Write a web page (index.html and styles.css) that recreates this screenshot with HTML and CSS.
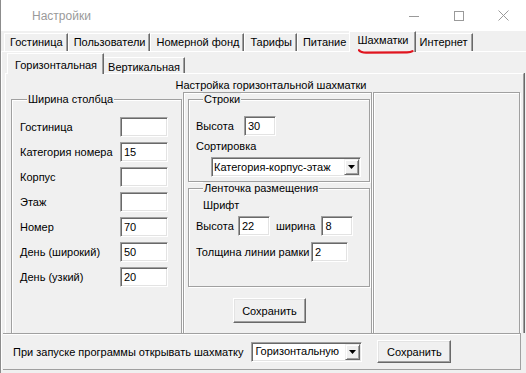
FILE: index.html
```html
<!DOCTYPE html>
<html lang="ru">

<head>
    <meta charset="UTF-8">
    <meta name="viewport" content="width=device-width, initial-scale=1.0">
    <title>Настройки</title>
    <link rel="stylesheet" href="styles.css">
</head>

<body>
    <div class="window">
        <div class="titlebar">
            <span class="title">Настройки</span>
            <div class="controls">
                <span class="ctl"><svg width="10" height="10" viewBox="0 0 10 10"><path d="M0 5.5H10" stroke="#9a9a9a" /></svg></span>
                <span class="ctl"><svg width="10" height="10" viewBox="0 0 10 10"><rect x="0.5" y="0.5" width="9" height="9" fill="none" stroke="#9a9a9a" /></svg></span>
                <span class="ctl"><svg width="11" height="11" viewBox="0 0 11 11"><path d="M0.5 0.5L10.5 10.5M10.5 0.5L0.5 10.5" stroke="#9a9a9a" /></svg></span>
            </div>
        </div>

        <div class="tabs tabs-outer">
            <span class="tab">Гостиница</span>
            <span class="tab">Пользователи</span>
            <span class="tab">Номерной фонд</span>
            <span class="tab">Тарифы</span>
            <span class="tab">Питание</span>
            <span class="tab active">Шахматки<svg class="mark" width="56" height="6" viewBox="0 0 56 6"><path d="M1 1.2Q3 3.6 8 3.6L49 3.4Q53 3.3 54.5 2.2" fill="none" stroke="#e0141e" stroke-width="2.2" stroke-linecap="round" /></svg></span>
            <span class="tab">Интернет</span>
        </div>

        <div class="page">
            <div class="tabs tabs-inner">
                <span class="tab active">Горизонтальная</span>
                <span class="tab">Вертикальная</span>
            </div>

            <div class="subpage">
                <div class="caption">Настройка горизонтальной шахматки</div>
                <div class="columns">
                    <div class="col col-left">
                        <fieldset class="group group-width">
                            <legend>Ширина столбца</legend>
                            <div class="form">
                                <label>Гостиница</label><span class="edit"></span>
                                <label>Категория номера</label><span class="edit">15</span>
                                <label>Корпус</label><span class="edit"></span>
                                <label>Этаж</label><span class="edit"></span>
                                <label>Номер</label><span class="edit">70</span>
                                <label>День (широкий)</label><span class="edit">50</span>
                                <label>День (узкий)</label><span class="edit">20</span>
                            </div>
                        </fieldset>
                    </div>

                    <div class="col col-mid frame">
                        <fieldset class="group group-rows">
                            <legend>Строки</legend>
                            <div class="row">
                                <label class="lbl-height">Высота</label><span class="edit edit-sm">30</span>
                            </div>
                            <div class="sort-label">Сортировка</div>
                            <div class="combo combo-sort">
                                <span class="combo-text">Категория-корпус-этаж</span>
                                <span class="combo-btn"><svg width="7" height="4" viewBox="0 0 7 4"><path d="M0 0H7L3.5 4Z" /></svg></span>
                            </div>
                        </fieldset>

                        <fieldset class="group group-strip">
                            <legend>Ленточка размещения</legend>
                            <div class="font-label">Шрифт</div>
                            <div class="row">
                                <label class="lbl-h2">Высота</label><span class="edit edit-sm">22</span>
                                <label class="lbl-w">ширина</label><span class="edit edit-sm">8</span>
                            </div>
                            <div class="row row-border">
                                <label class="lbl-border">Толщина линии рамки</label><span class="edit edit-md">2</span>
                            </div>
                        </fieldset>

                        <button class="button button-save">Сохранить</button>
                    </div>

                    <div class="col col-right frame"></div>
                </div>
            </div>

            <div class="startup">
                <span>При запуске программы открывать шахматку</span>
                <div class="combo combo-start">
                    <span class="combo-text">Горизонтальную</span>
                    <span class="combo-btn"><svg width="7" height="4" viewBox="0 0 7 4"><path d="M0 0H7L3.5 4Z" /></svg></span>
                </div>
                <button class="button button-start">Сохранить</button>
            </div>
        </div>
    </div>
</body>

</html>
```

FILE: styles.css
```css
* {
    padding: 0;
    margin: 0;
    box-sizing: border-box;
}

html,
body {
    width: 526px;
    height: 373px;
    overflow: hidden;
}

body {
    background-color: #f0f0f0;
    font-family: "Liberation Sans", Arial, sans-serif;
    font-size: 11px;
    color: #000;
}

.window {
    height: 373px;
    border-left: 1px solid #8c8c8c;
}

/* title bar */
.titlebar {
    display: flex;
    align-items: center;
    height: 31px;
    background-color: #fff;
}

.title {
    flex: 1;
    padding-left: 31px;
    font-size: 12px;
    color: #9a9a9a;
}

.controls {
    display: flex;
}

.ctl {
    display: flex;
    align-items: center;
    justify-content: center;
    width: 45px;
    height: 31px;
}

/* tabs */
.tabs {
    display: flex;
    align-items: flex-end;
}

.tabs-outer {
    height: 20px;
    padding-left: 3px;
}

.tabs-inner {
    height: 21px;
    padding-left: 7px;
}

.tab {
    height: 18px;
    padding: 2px 4px 0 5px;
    line-height: 13px;
    white-space: nowrap;
    border-top: 1px solid #fff;
    border-left: 1px solid #fff;
    border-right: 1px solid #696969;
    box-shadow: inset -1px 0 0 #a0a0a0;
}

.tab.active {
    position: relative;
    z-index: 1;
    height: 21px;
    margin: 0 -2px -1px;
    padding: 2px 6px 0 7px;
    background-color: #f0f0f0;
}

.tabs-inner .tab {
    height: 16px;
    padding-top: 3px;
    line-height: 12px;
}

.tabs-inner .tab.active {
    height: 21px;
    padding-top: 5px;
    line-height: 13px;
}

.mark {
    position: absolute;
    left: 8px;
    top: 17px;
}

/* pages */
.page {
    border-top: 1px solid #fff;
    border-left: 1px solid #fff;
}

.subpage {
    margin-left: 3px;
    width: 519px;
    border-top: 1px solid #fff;
    border-left: 1px solid #fff;
    border-right: 1px solid #a0a0a0;
    box-shadow: 1px 0 0 #696969;
}

.caption {
    height: 18px;
    padding: 5px 0 0 13px;
    line-height: 13px;
    text-align: center;
}

.columns {
    display: flex;
    height: 241px;
    overflow: hidden;
}

.frame {
    border: 1px solid #a0a0a0;
    box-shadow: inset 1px 1px 0 #fff, 1px 1px 0 #fff;
}

.col-left {
    width: 177px;
    padding: 1px 0 0 5px;
}

.col-mid {
    width: 189px;
    height: 250px;
    padding: 0 1px 0 4px;
}

.col-right {
    width: 147px;
    height: 250px;
    margin-left: 1px;
}

/* group boxes */
.group {
    border: 1px solid #a0a0a0;
    box-shadow: inset 1px 1px 0 #fff, 1px 1px 0 #fff;
}

.group legend {
    margin-left: 7px;
    padding: 0 1px;
    line-height: 13px;
    background-color: #f0f0f0;
}

.group-width {
    width: 171px;
    height: 260px;
    padding: 8px 0 0 8px;
}

.form {
    display: grid;
    grid-template-columns: 100px 48px;
    grid-auto-rows: 25px;
    align-items: center;
}

.group-rows {
    width: 182px;
    height: 89px;
    padding: 10px 0 0 7px;
}

.group-strip {
    width: 182px;
    height: 105px;
    padding: 4px 0 0 7px;
}

.row {
    display: flex;
    align-items: center;
}

.lbl-height {
    width: 48px;
}

.sort-label {
    margin-top: 4px;
    line-height: 13px;
}

.font-label {
    margin-left: 7px;
    line-height: 13px;
}

.group-strip .row {
    margin-top: 4px;
}

.group-strip .row-border {
    margin-top: 6px;
}

.lbl-h2 {
    width: 42px;
}

.lbl-w {
    margin: 0 6px 0 6px;
}

.lbl-border {
    width: 115px;
}

/* controls */
.edit {
    display: block;
    width: 48px;
    height: 20px;
    padding: 0 3px;
    line-height: 18px;
    background-color: #fff;
    border: 1px solid;
    border-color: #a0a0a0 #fff #fff #a0a0a0;
    box-shadow: inset 1px 1px 0 #696969, inset -1px -1px 0 #e3e3e3;
}

.edit-sm {
    width: 32px;
}

.edit-md {
    width: 37px;
}

.combo {
    display: flex;
    align-items: center;
    height: 20px;
    padding: 1px 1px 1px 2px;
    background-color: #fff;
    border: 1px solid;
    border-color: #a0a0a0 #fff #fff #a0a0a0;
    box-shadow: inset 1px 1px 0 #696969, inset -1px -1px 0 #e3e3e3;
}

.combo-text {
    flex: 1;
    line-height: 13px;
    white-space: nowrap;
}

.combo-btn {
    display: flex;
    align-items: center;
    justify-content: center;
    width: 15px;
    height: 16px;
    background-color: #f0f0f0;
    border: 1px solid;
    border-color: #f0f0f0 #696969 #696969 #f0f0f0;
    box-shadow: inset 1px 1px 0 #fff, inset -1px -1px 0 #a0a0a0;
}

.combo-sort {
    width: 150px;
    margin: 4px 0 0 15px;
}

.button {
    display: block;
    height: 25px;
    font: inherit;
    color: #000;
    background-color: #f0f0f0;
    border: 1px solid;
    border-color: #fff #696969 #696969 #fff;
    box-shadow: inset -1px -1px 0 #a0a0a0, inset 1px 1px 0 #e3e3e3;
}

.button-save {
    width: 73px;
    margin: 11px 0 0 45px;
}

/* bottom bar */
.startup {
    display: flex;
    align-items: center;
    width: 518px;
    height: 37px;
    margin-left: 1px;
    padding-left: 10px;
    border: 1px solid #a0a0a0;
    border-left: none;
    box-shadow: inset 0 1px 0 #fff;
}

.combo-start {
    width: 111px;
    margin-left: 8px;
}

.combo-start .combo-text {
    padding-left: 1px;
}

.button-start {
    width: 74px;
    height: 23px;
    margin-left: 15px;
}
```
